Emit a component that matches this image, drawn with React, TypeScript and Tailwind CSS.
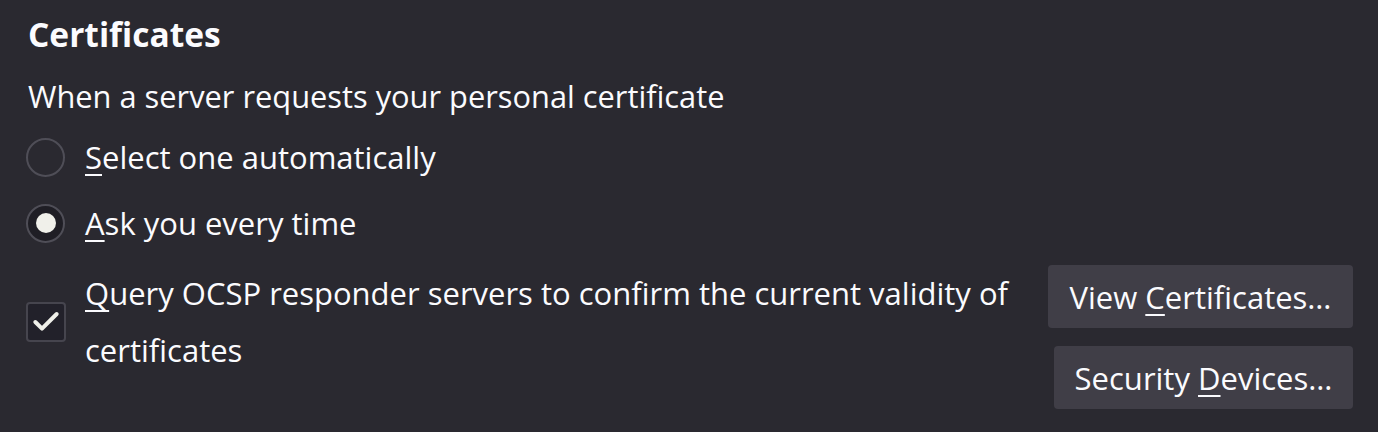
import { Check } from "lucide-react";

function Key({ k }: { k: string }) {
  return <span className="underline decoration-2 underline-offset-[5px]">{k}</span>;
}

function Radio({ checked }: { checked?: boolean }) {
  return (
    <span
      className={
        "flex h-[39px] w-[39px] shrink-0 items-center justify-center rounded-full border-2 border-[#4f4e57] " +
        (checked ? "bg-[#1f1e25]" : "bg-[#2a2930]")
      }
    >
      {checked && <span className="h-[20px] w-[20px] rounded-full bg-[#f0f0ea]" />}
    </span>
  );
}

function Button({ children, width }: { children: React.ReactNode; width: string }) {
  return (
    <button
      className={
        "flex h-[63px] items-center justify-center rounded-[4px] bg-[#403e47] text-[31px] leading-[42px] text-[#fbfbfe] " +
        width
      }
    >
      {children}
    </button>
  );
}

export default function App() {
  return (
    <div
      className="min-h-screen w-full bg-[#2a2930] pl-[26px] pr-[25px] pt-[10px] text-[#fbfbfe]"
      style={{ fontFamily: '"Open Sans", sans-serif' }}
    >
      <h2 className="pl-[2px] text-[33.5px] font-bold leading-[48px]">Certificates</h2>
      <p className="mt-[17px] pl-[2px] text-[30.8px] leading-[42px]">
        When a server requests your personal certificate
      </p>

      <div className="mt-[19px] flex flex-col gap-[24px]">
        <label className="flex items-center gap-[20px]">
          <Radio />
          <span className="text-[31px] leading-[42px]">
            <Key k="S" />elect one automatically
          </span>
        </label>
        <label className="flex items-center gap-[20px]">
          <Radio checked />
          <span className="text-[31px] leading-[42px]">
            <Key k="A" />sk you every time
          </span>
        </label>
      </div>

      <div className="mt-[18px] flex items-start gap-[24px]">
        <label className="mt-[3px] flex flex-1 items-center gap-[19px]">
          <span className="flex h-[40px] w-[40px] shrink-0 items-center justify-center rounded-[4px] border-2 border-[#46454e] bg-[#22212a]">
            <Check className="h-[32px] w-[32px] text-[#f0f0ea]" strokeWidth={3} />
          </span>
          <span className="text-[31px] leading-[57px]">
            <Key k="Q" />uery OCSP responder servers to confirm the current validity of certificates
          </span>
        </label>
        <div className="mt-[3px] flex flex-col items-end gap-[18px]">
          <Button width="w-[305px]">
            View&nbsp;<Key k="C" />ertificates…
          </Button>
          <Button width="w-[299px]">
            Security&nbsp;<Key k="D" />evices…
          </Button>
        </div>
      </div>
    </div>
  );
}
